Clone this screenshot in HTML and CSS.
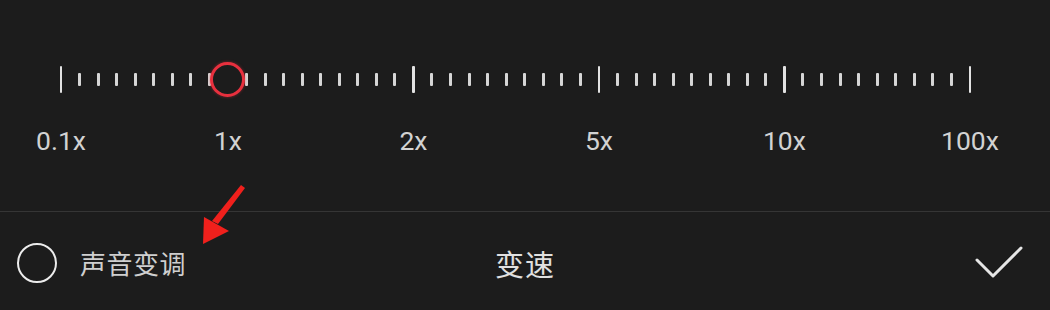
FILE: index.html
```html
<!DOCTYPE html>
<html lang="zh">
<head>
<meta charset="utf-8">
<link rel="stylesheet" href="styles.css">
</head>
<body>
<div class="panel">
  <section class="slider">
    <div class="ticks">
      <span class="tick major"></span><span class="tick"></span><span class="tick"></span><span class="tick"></span><span class="tick"></span><span class="tick"></span><span class="tick"></span><span class="tick"></span><span class="tick"></span>
      <span class="tick major knob-cell"><span class="knob"></span></span><span class="tick"></span><span class="tick"></span><span class="tick"></span><span class="tick"></span><span class="tick"></span><span class="tick"></span><span class="tick"></span><span class="tick"></span><span class="tick"></span>
      <span class="tick major"></span><span class="tick"></span><span class="tick"></span><span class="tick"></span><span class="tick"></span><span class="tick"></span><span class="tick"></span><span class="tick"></span><span class="tick"></span><span class="tick"></span>
      <span class="tick major"></span><span class="tick"></span><span class="tick"></span><span class="tick"></span><span class="tick"></span><span class="tick"></span><span class="tick"></span><span class="tick"></span><span class="tick"></span><span class="tick"></span>
      <span class="tick major"></span><span class="tick"></span><span class="tick"></span><span class="tick"></span><span class="tick"></span><span class="tick"></span><span class="tick"></span><span class="tick"></span><span class="tick"></span><span class="tick"></span>
      <span class="tick major"></span>
    </div>
    <div class="labels">
      <span class="label c1">0.1x</span>
      <span class="label c10">1x</span>
      <span class="label c20">2x</span>
      <span class="label c30">5x</span>
      <span class="label c40">10x</span>
      <span class="label c50">100x</span>
    </div>
  </section>
  <footer class="bar">
    <div class="pitch">
      <span class="radio"></span>
      <span class="pitch-text">声音变调</span>
    </div>
    <div class="title">变速</div>
    <div class="confirm">
      <svg width="48" height="34" viewBox="0 0 48 34"><polyline points="2,14 18,30 46,2" fill="none" stroke="#e6e6e6" stroke-width="3" stroke-linecap="round" stroke-linejoin="round"/></svg>
    </div>
  </footer>
  <svg class="arrow" width="60" height="70" viewBox="0 0 60 70">
    <polygon points="50,3 54,6 27,42 21,39" fill="#f0201c"/>
    <polygon points="12,62 13,35 38,49" fill="#f0201c"/>
  </svg>
</div>
</body>
</html>
```
FILE: styles.css
```css
* { box-sizing: border-box; }
html, body { margin: 0; padding: 0; }
body {
  background: #1c1c1c;
  font-family: Roboto, "Noto Sans CJK SC", sans-serif;
  width: 1050px;
  height: 310px;
  overflow: hidden;
}
.panel {
  position: relative;
  width: 1050px;
  height: 310px;
}
.slider {
  height: 212px;
  border-bottom: 1px solid #353535;
  padding-top: 66px;
}
.ticks, .labels {
  display: grid;
  grid-template-columns: repeat(50, minmax(0, 1fr));
  width: 927.5px;
  margin-left: 51.7px;
}
.ticks {
  height: 27px;
  align-items: center;
}
.tick {
  justify-self: center;
  width: 3px;
  height: 13px;
  background: #d6d6d6;
  border-radius: 1px;
}
.tick.major {
  width: 2.4px;
  height: 27px;
  background: #e2e2e2;
}
.knob-cell { position: relative; }
.knob {
  position: absolute;
  left: 50%;
  top: 50%;
  width: 35px;
  height: 35px;
  margin-left: -17.5px;
  margin-top: -17.5px;
  border-radius: 50%;
  border: 3.5px solid #e8303e;
  background: #1c1c1c;
  box-shadow: 0 0 3px rgba(232, 48, 62, 0.5);
}
.labels {
  margin-top: 31px;
  height: 32px;
  align-items: center;
}
.label {
  justify-self: center;
  white-space: nowrap;
  font-size: 26.5px;
  color: #d2d2d2;
}
.c1 { grid-column: 1; }
.c10 { grid-column: 10; }
.c20 { grid-column: 20; }
.c30 { grid-column: 30; }
.c40 { grid-column: 40; }
.c50 { grid-column: 50; }
.bar {
  height: 97px;
  display: grid;
  grid-template-columns: 1fr auto 1fr;
  align-items: center;
  padding: 4px 0 0 0;
}
.pitch {
  display: flex;
  align-items: center;
  gap: 23px;
  padding-left: 17px;
}
.radio {
  width: 40px;
  height: 40px;
  border-radius: 50%;
  border: 2.5px solid #ececec;
}
.pitch-text {
  font-family: "Noto Sans CJK SC", sans-serif;
  font-size: 26px;
  color: #cfcfcf;
  letter-spacing: 0.5px;
}
.title {
  font-family: "Noto Sans CJK SC", sans-serif;
  font-size: 29px;
  color: #e0e0e0;
  letter-spacing: 1px;
}
.confirm {
  justify-self: end;
  padding-right: 27px;
  display: flex;
}
.arrow {
  position: absolute;
  left: 191px;
  top: 182px;
}
```
